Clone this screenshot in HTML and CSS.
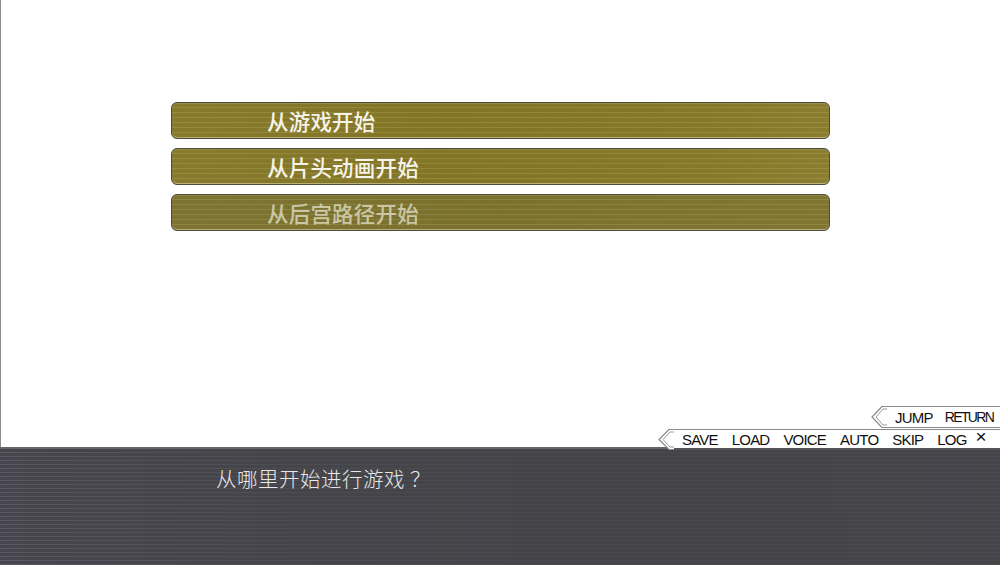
FILE: index.html
```html
<!DOCTYPE html>
<html lang="zh-CN">
<head>
<meta charset="utf-8">
<title>从哪里开始进行游戏</title>
<link rel="stylesheet" href="styles.css">
</head>
<body>
<div class="screen">
  <div class="stage">
    <div class="menu">
      <div class="choice"><span>从游戏开始</span></div>
      <div class="choice"><span>从片头动画开始</span></div>
      <div class="choice dim"><span>从后宫路径开始</span></div>
    </div>
    <div class="toolbar">
      <div class="bar bar-top">
        <svg class="chev" width="16" height="22" viewBox="0 0 16 22"><path d="M16 0.5 H11 L1 11 L11 21.5 H16" fill="#fff" stroke="#8a8a8a" stroke-width="1.2"/><path d="M16 3 H12 L5 11 L12 19 H16" fill="none" stroke="#9a9a9a" stroke-width="1"/></svg>
        <div class="items"><span>JUMP</span><span class="narrow">RETURN</span></div>
      </div>
      <div class="bar bar-main">
        <svg class="chev" width="16" height="21" viewBox="0 0 16 21"><path d="M16 0.5 H11 L1 10.5 L11 20.5 H16" fill="#fff" stroke="#8a8a8a" stroke-width="1.2"/><path d="M16 3 H12 L5 10.5 L12 18 H16" fill="none" stroke="#9a9a9a" stroke-width="1"/></svg>
        <div class="items"><span>SAVE</span><span>LOAD</span><span>VOICE</span><span>AUTO</span><span>SKIP</span><span>LOG</span><span class="close">×</span></div>
      </div>
    </div>
  </div>
  <div class="dialog">
    <p class="line">从哪里开始进行游戏<span class="q">？</span></p>
  </div>
</div>
</body>
</html>
```

FILE: styles.css
```css
html, body {
  margin: 0;
  padding: 0;
  background: #ffffff;
}
.screen {
  width: 1000px;
  height: 565px;
  display: flex;
  flex-direction: column;
  overflow: hidden;
  font-family: "Noto Sans CJK SC", "Noto Sans", sans-serif;
}
.stage {
  height: 447px;
  flex: none;
  display: flex;
  flex-direction: column;
  border-left: 1px solid #8c8c8c;
  box-sizing: border-box;
  padding-top: 102px;
  position: relative;
  z-index: 2;
}
.menu {
  margin-left: 170px;
  width: 659px;
  display: flex;
  flex-direction: column;
  gap: 9px;
}
.choice {
  height: 37px;
  box-sizing: border-box;
  border: 1px solid #4e4b3c;
  border-radius: 6px;
  box-shadow: inset 0 -1px 0 rgba(255,255,230,0.35), inset 0 1px 0 rgba(255,255,230,0.15);
  background:
    repeating-linear-gradient(to bottom, rgba(255,250,200,0) 0px, rgba(255,250,200,0) 4px, rgba(255,250,200,0.13) 4px, rgba(255,250,200,0.13) 5px),
    linear-gradient(to right, #887a2c 0%, #837526 40%, #857826 80%, #8a7d30 100%);
  display: flex;
  align-items: center;
  padding-left: 95px;
}
.choice span {
  font-size: 21.5px;
  font-weight: 500;
  line-height: 1;
  color: #f6f4e8;
  letter-spacing: 0.2px;
  position: relative;
  top: 0.5px;
}
.choice.dim {
  background:
    repeating-linear-gradient(to bottom, rgba(255,250,200,0) 0px, rgba(255,250,200,0) 4px, rgba(255,250,200,0.12) 4px, rgba(255,250,200,0.12) 5px),
    linear-gradient(to right, #7e7432 0%, #7b712d 50%, #817631 100%);
}
.choice.dim span {
  color: #cbc7a6;
}
.toolbar {
  margin-top: auto;
  margin-bottom: -3px;
  display: flex;
  flex-direction: column;
  align-items: flex-end;
  gap: 1px;
}
.bar {
  display: flex;
  align-items: stretch;
  font-family: "Liberation Sans", Arial, sans-serif;
  font-size: 15px;
  letter-spacing: -0.8px;
  color: #111;
}
.bar .chev {
  display: block;
  flex: none;
}
.bar .items {
  display: flex;
  align-items: center;
  border-top: 1px solid #8a8a8a;
  border-bottom: 1px solid #8a8a8a;
  background: #fff;
}
.bar-top {
  height: 22px;
  width: 129px;
}
.bar-top .items {
  flex: 1;
  gap: 12px;
  padding-left: 8px;
  box-sizing: border-box;
  overflow: hidden;
}
.bar .narrow {
  font-size: 14px;
  letter-spacing: -1.6px;
}
.bar-main {
  height: 21px;
  width: 342px;
}
.bar-main .items {
  flex: 1;
  gap: 14px;
  padding-left: 8px;
  border-bottom: 2px solid #555;
  box-sizing: border-box;
}
.bar .close {
  font-size: 19px;
  font-weight: 300;
  letter-spacing: 0;
  margin-left: -5px;
  position: relative;
  top: -2px;
}
.dialog {
  flex: 1;
  border-top: 2px solid #66666a;
  background:
    linear-gradient(to right, rgba(68,68,72,0) 0%, rgba(68,68,72,0.6) 30%, rgba(68,68,72,0.8) 60%, rgba(68,68,72,0.7) 100%),
    repeating-linear-gradient(to bottom, #45454b 0px, #45454b 3px, #585868 3px, #585868 4px);
  padding-left: 216px;
}
.dialog .line {
  margin: 16px 0 0;
  font-size: 20.5px;
  font-weight: 300;
  line-height: 26px;
  color: #e8e8e8;
  letter-spacing: 0.5px;
}
.dialog .q {
  margin-left: 5px;
}
```
